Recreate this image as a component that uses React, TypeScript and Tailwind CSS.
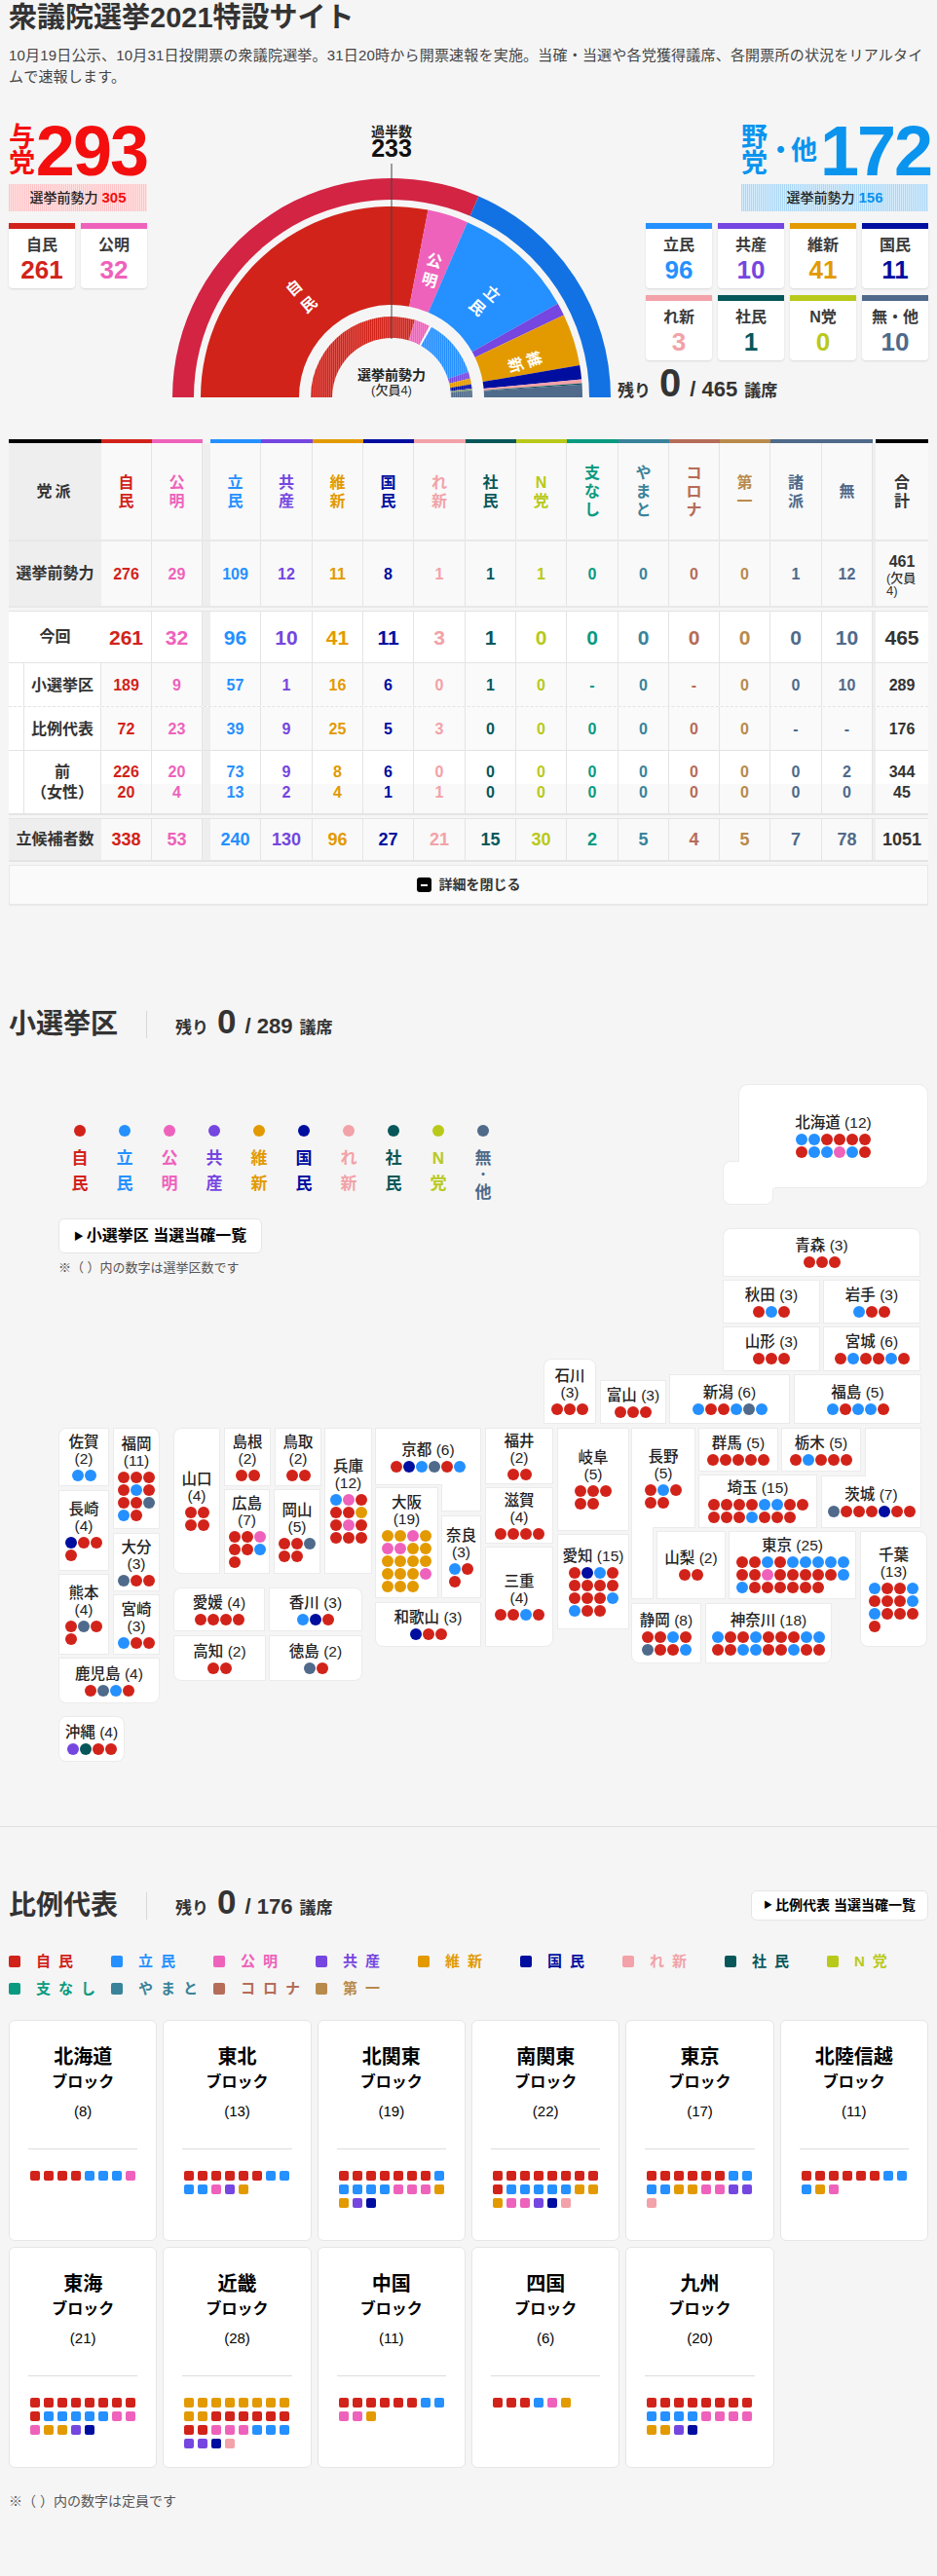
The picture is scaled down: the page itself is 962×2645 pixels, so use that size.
const P = {
  r: { bg: 'bg-[#d1231a]', text: 'text-[#d1231a]', fill: '#d1231a' },
  k: { bg: 'bg-[#ee62bb]', text: 'text-[#ee62bb]', fill: '#ee62bb' },
  b: { bg: 'bg-[#2590ff]', text: 'text-[#2590ff]', fill: '#2590ff' },
  u: { bg: 'bg-[#7546e0]', text: 'text-[#7546e0]', fill: '#7546e0' },
  o: { bg: 'bg-[#e29a00]', text: 'text-[#e29a00]', fill: '#e29a00' },
  n: { bg: 'bg-[#000ea0]', text: 'text-[#000ea0]', fill: '#000ea0' },
  l: { bg: 'bg-[#f2a2a8]', text: 'text-[#f2a2a8]', fill: '#f2a2a8' },
  s: { bg: 'bg-[#07575a]', text: 'text-[#07575a]', fill: '#07575a' },
  y: { bg: 'bg-[#b8c91a]', text: 'text-[#b8c91a]', fill: '#b8c91a' },
  g: { bg: 'bg-[#4f6a8a]', text: 'text-[#4f6a8a]', fill: '#4f6a8a' },
  a: { bg: 'bg-[#0a9a80]', text: 'text-[#0a9a80]', fill: '#0a9a80' },
  m: { bg: 'bg-[#39839a]', text: 'text-[#39839a]', fill: '#39839a' },
  c: { bg: 'bg-[#b56c58]', text: 'text-[#b56c58]', fill: '#b56c58' },
  d: { bg: 'bg-[#b88a4c]', text: 'text-[#b88a4c]', fill: '#b88a4c' },
} as const

type Key = keyof typeof P

const keys = (s: string) => s.split('') as Key[]

const FONT = "font-['Liberation_Sans','Noto_Sans_CJK_JP',sans-serif]"

function polar(r: number, deg: number) {
  const a = (deg * Math.PI) / 180
  return [251 - r * Math.cos(a), 280 - r * Math.sin(a)]
}

function sector(r0: number, r1: number, from: number, to: number) {
  const a = (from / 465) * 180
  const b = (to / 465) * 180
  const [x0, y0] = polar(r1, a)
  const [x1, y1] = polar(r1, b)
  const [x2, y2] = polar(r0, b)
  const [x3, y3] = polar(r0, a)
  return `M${x0} ${y0}A${r1} ${r1} 0 0 1 ${x1} ${y1}L${x2} ${y2}A${r0} ${r0} 0 0 0 ${x3} ${y3}Z`
}

function Ring({ r0, r1, parts, striped }: { r0: number; r1: number; parts: [string, number][]; striped?: boolean }) {
  let at = 0
  return (
    <>
      {parts.map(([fill, n], i) => {
        const d = sector(r0, r1, at, at + n)
        at += n
        return (
          <g key={i}>
            <path d={d} fill={fill} />
            {striped && <path d={d} fill="url(#stripes)" />}
          </g>
        )
      })}
    </>
  )
}

const chartLabels: [string, number, number, number][] = [
  ['自', 151, 168, -40],
  ['民', 166, 185, -40],
  ['公', 295, 140, 16],
  ['明', 290, 160, 16],
  ['立', 354, 174, 42],
  ['民', 339, 188, 42],
  ['維', 397, 241, 72],
  ['新', 378, 247, 72],
]

function Chart() {
  return (
    <svg width="512" height="280" viewBox="0 0 512 280" className="block">
      <defs>
        <pattern id="stripes" width="2" height="2" patternUnits="userSpaceOnUse">
          <rect width="1" height="2" fill="#ffffff" fillOpacity="0.22" />
        </pattern>
      </defs>
      <Ring r0={203} r1={225} parts={[['#d32443', 293], ['#1272e3', 172]]} />
      <Ring
        r0={95}
        r1={196}
        parts={[
          [P.r.fill, 261],
          [P.k.fill, 32],
          [P.b.fill, 96],
          [P.u.fill, 10],
          [P.o.fill, 41],
          [P.n.fill, 11],
          [P.l.fill, 3],
          [P.s.fill, 1],
          [P.g.fill, 10],
        ]}
      />
      <Ring
        r0={61}
        r1={83}
        striped
        parts={[
          [P.r.fill, 276],
          [P.k.fill, 29],
          ['#ffffff', 4],
          [P.b.fill, 109],
          [P.u.fill, 12],
          [P.o.fill, 11],
          [P.n.fill, 8],
          [P.l.fill, 1],
          [P.s.fill, 1],
          [P.y.fill, 1],
          [P.g.fill, 13],
        ]}
      />
      <line x1="251" y1="40" x2="251" y2="220" stroke="#444" strokeWidth="1" />
      <text x="251" y="12" textAnchor="middle" fontSize="14" fontWeight="700" fill="#222">
        過半数
      </text>
      <text x="251" y="33" textAnchor="middle" fontSize="25" fontWeight="700" fill="#111">
        233
      </text>
      {chartLabels.map(([c, x, y, rot], i) => (
        <text
          key={i}
          x={x}
          y={y}
          textAnchor="middle"
          dominantBaseline="central"
          fontSize="16"
          fontWeight="700"
          fill="#fff"
          transform={`rotate(${rot} ${x} ${y})`}
        >
          {c}
        </text>
      ))}
      <text x="251" y="262" textAnchor="middle" fontSize="14" fontWeight="700" fill="#222">
        選挙前勢力
      </text>
      <text x="251" y="277" textAnchor="middle" fontSize="13" fontWeight="500" fill="#333">
        (欠員4)
      </text>
    </svg>
  )
}

function SeatCard({ name, value, p }: { name: string; value: number; p: Key }) {
  return (
    <div className="flex h-[67px] flex-col items-center rounded-b-[4px] bg-white shadow-[0_1px_2px_#d8d8d8]">
      <div className={`h-[6px] w-full ${P[p].bg}`} />
      <div className="mt-[6px] text-[16px] leading-[22px] font-bold text-[#3a3a3a]">{name}</div>
      <div className={`text-[26px] leading-[28px] font-bold ${P[p].text}`}>{value}</div>
    </div>
  )
}

function Remaining({ total, big = false }: { total: number; big?: boolean }) {
  return (
    <div className="flex items-baseline font-bold whitespace-nowrap text-[#333]">
      <span className="text-[17px]">残り</span>
      <span className={`mx-[9px] ${big ? 'text-[40px] leading-[32px]' : 'text-[35px] leading-[28px]'}`}>0</span>
      <span className="text-[22px]">/ {total}</span>
      <span className="ml-[7px] text-[17px]">議席</span>
    </div>
  )
}

function Hero() {
  return (
    <div className="flex h-[323px] items-start px-[9px]">
      <div className="w-[142px] shrink-0">
        <div className="flex h-[54px] items-center text-[#f40f0f]">
          <div className="w-[28px] text-[27px] leading-[27px] font-bold">与<br />党</div>
          <div className="text-[72px] leading-[54px] font-bold tracking-[-2px]">293</div>
        </div>
        <div className="mt-[7px] flex h-[28px] items-center justify-center bg-[repeating-linear-gradient(90deg,#ffc4c8_0,#ffc4c8_1px,#ffe2e2_1px,#ffe2e2_2px)] text-[14px] font-medium text-[#222]">
          選挙前勢力<span className="ml-[4px] text-[15px] font-bold text-[#f40f0f]">305</span>
        </div>
        <div className="mt-[12px] grid grid-cols-2 gap-[6px]">
          <SeatCard name="自民" value={261} p="r" />
          <SeatCard name="公明" value={32} p="k" />
        </div>
      </div>
      <div className="w-[512px] shrink-0">
        <Chart />
      </div>
      <div className="w-[290px] shrink-0">
        <div className="ml-[98px] flex h-[54px] items-center text-[#0a94ee]">
          <div className="w-[27px] text-[27px] leading-[27px] font-bold">野<br />党</div>
          <div className="w-[24px] text-center text-[27px] leading-[27px] font-bold">・</div>
          <div className="w-[28px] text-[27px] leading-[27px] font-bold">他</div>
          <div className="ml-[3px] text-[72px] leading-[54px] font-bold tracking-[-2px]">172</div>
        </div>
        <div className="mt-[7px] ml-[98px] flex h-[28px] items-center justify-center bg-[repeating-linear-gradient(90deg,#acd8f6_0,#acd8f6_1px,#d6ecfb_1px,#d6ecfb_2px)] text-[14px] font-medium text-[#222]">
          選挙前勢力<span className="ml-[4px] text-[15px] font-bold text-[#0a94ee]">156</span>
        </div>
        <div className="mt-[12px] grid grid-cols-4 gap-x-[6px] gap-y-[7px]">
          <SeatCard name="立民" value={96} p="b" />
          <SeatCard name="共産" value={10} p="u" />
          <SeatCard name="維新" value={41} p="o" />
          <SeatCard name="国民" value={11} p="n" />
          <SeatCard name="れ新" value={3} p="l" />
          <SeatCard name="社民" value={1} p="s" />
          <SeatCard name="N党" value={0} p="y" />
          <SeatCard name="無・他" value={10} p="g" />
        </div>
        <div className="mt-[7px] -ml-[29px]">
          <Remaining total={465} big />
        </div>
      </div>
    </div>
  )
}

const ROW = 'grid grid-cols-[95px_52px_52px_8px_52px_53px_52px_52px_53px_52px_52px_53px_52px_52px_52px_53px_52px_3px_54px]'
const colKeys = keys('rk')
const restKeys = keys('buonlsyamcdgg')
const headers = ['自民', '公明', '立民', '共産', '維新', '国民', 'れ新', '社民', 'N党', '支なし', 'やまと', 'コロナ', '第一', '諸派', '無']
const CELL = 'flex flex-col items-center justify-center border-r border-[#e4e4e4] font-bold'

function Lines({ value }: { value: string }) {
  return (
    <>
      {value.split('/').map((t, j) => (
        <div key={j} className="leading-[21px]">{t}</div>
      ))}
    </>
  )
}

function Cells({ values, size, note }: { values: string[]; size: string; note?: boolean }) {
  return (
    <>
      {colKeys.map((k, i) => (
        <div key={i} className={`${CELL} ${size} ${P[k].text}`}><Lines value={values[i]} /></div>
      ))}
      <div className="bg-[#eeeeee]" />
      {restKeys.map((k, i) => (
        <div key={i} className={`${CELL} ${size} ${P[k].text}`}><Lines value={values[i + 2]} /></div>
      ))}
      <div className="bg-[#eeeeee]" />
      <div className={`${CELL} border-r-0 ${size} text-[#333]`}>
        <Lines value={values[15]} />
        {note && (
          <div className="w-[32px] text-[13px] leading-[13px] font-medium">(欠員<br />4)</div>
        )}
      </div>
    </>
  )
}

function SubLabel({ children }: { children: React.ReactNode }) {
  return (
    <div className="flex h-full bg-white">
      <div className="w-[15px]" />
      <div className="flex flex-1 items-center justify-center border-r border-l border-[#e4e4e4] text-center text-[16px] leading-[21px] font-bold text-[#333]">
        {children}
      </div>
    </div>
  )
}

function ResultTable() {
  return (
    <div className="mx-[9px]">
      <div className={`${ROW} h-[4px]`}>
        <div className="bg-black" />
        {colKeys.map((k) => <div key={k} className={P[k].bg} />)}
        <div />
        {restKeys.map((k, i) => <div key={i} className={P[k].bg} />)}
        <div />
        <div className="bg-black" />
      </div>
      <div className={`${ROW} h-[101px] border-b-2 border-[#e8e8e8] bg-[#f9f9f9]`}>
        <div className="flex items-center justify-center bg-[#eeeeee] text-[16px] font-bold tracking-[3px] text-[#333]">党派</div>
        {headers.slice(0, 2).map((h, i) => (
          <div key={h} className={`${CELL} text-[16px] ${P[colKeys[i]].text}`}>
            {h.split('').map((c, j) => <div key={j} className="leading-[19px]">{c}</div>)}
          </div>
        ))}
        <div className="bg-[#eeeeee]" />
        {headers.slice(2).map((h, i) => (
          <div key={h} className={`${CELL} text-[16px] ${P[restKeys[i]].text}`}>
            {h.split('').map((c, j) => <div key={j} className="leading-[19px]">{c}</div>)}
          </div>
        ))}
        <div className="bg-[#eeeeee]" />
        <div className={`${CELL} border-r-0 text-[16px] text-[#333]`}>
          <div className="leading-[19px]">合</div>
          <div className="leading-[19px]">計</div>
        </div>
      </div>
      <div className={`${ROW} h-[68px] border-b-2 border-[#e8e8e8] bg-[#f9f9f9]`}>
        <div className="flex items-center justify-center bg-[#eeeeee] text-[16px] font-bold text-[#333]">選挙前勢力</div>
        <Cells size="text-[16px]" note values={['276', '29', '109', '12', '11', '8', '1', '1', '1', '0', '0', '0', '0', '1', '12', '461']} />
      </div>
      <div className={`${ROW} mt-[3px] h-[54px] border-t border-b border-[#e4e4e4] bg-white`}>
        <div className="flex items-center justify-center text-[16px] font-bold text-[#333]">今回</div>
        <Cells size="text-[21px]" values={['261', '32', '96', '10', '41', '11', '3', '1', '0', '0', '0', '0', '0', '0', '10', '465']} />
      </div>
      <div className={`${ROW} h-[45px] border-b border-dashed border-[#e4e4e4] bg-[#fafafa]`}>
        <SubLabel>小選挙区</SubLabel>
        <Cells size="text-[16px]" values={['189', '9', '57', '1', '16', '6', '0', '1', '0', '-', '0', '-', '0', '0', '10', '289']} />
      </div>
      <div className={`${ROW} h-[45px] border-b border-[#e4e4e4] bg-[#fafafa]`}>
        <SubLabel>比例代表</SubLabel>
        <Cells size="text-[16px]" values={['72', '23', '39', '9', '25', '5', '3', '0', '0', '0', '0', '0', '0', '-', '-', '176']} />
      </div>
      <div className={`${ROW} h-[66px] border-b-2 border-[#e4e4e4] bg-[linear-gradient(#ffffff_34px,#f9f9f9_34px)]`}>
        <SubLabel><span>前<br />（女性）</span></SubLabel>
        <Cells size="text-[16px]" values={['226/20', '20/4', '73/13', '9/2', '8/4', '6/1', '0/1', '0/0', '0/0', '0/0', '0/0', '0/0', '0/0', '0/0', '2/0', '344/45']} />
      </div>
      <div className={`${ROW} mt-[3px] h-[45px] border-t border-b-2 border-[#e4e4e4] bg-[#f9f9f9]`}>
        <div className="flex items-center justify-center bg-[#eeeeee] text-[16px] font-bold text-[#333]">立候補者数</div>
        <Cells size="text-[18px]" values={['338', '53', '240', '130', '96', '27', '21', '15', '30', '2', '5', '4', '5', '7', '78', '1051']} />
      </div>
      <div className="mt-[3px] flex h-[42px] items-center justify-center gap-[8px] border border-b-2 border-[#e8e8e8] bg-[#fafafa] text-[14px] font-bold text-[#333]">
        <span className="flex h-[15px] w-[15px] items-center justify-center rounded-[3px] bg-black">
          <span className="h-[2px] w-[7px] bg-white" />
        </span>
        詳細を閉じる
      </div>
    </div>
  )
}

const MAP_TOP = 1100

type Tile = { label?: string; x: number; y: number; w: number; h: number; dots?: string; cols?: number; cls?: string }

const tiles: Tile[] = [
  { label: '北海道 (12)', x: 758, y: 1114, w: 195, h: 107, dots: 'bbrrrrrbbkbr', cols: 6, cls: 'rounded-tl-[10px] rounded-tr-[10px] rounded-br-[10px]' },
  { x: 742, y: 1193, w: 52, h: 45, cls: 'rounded-tl-[8px] rounded-bl-[8px] rounded-br-[8px]' },
  { x: 759, y: 1188, w: 36, h: 33, cls: 'border-transparent' },
  { label: '青森 (3)', x: 742, y: 1262, w: 203, h: 50, dots: 'rrr', cols: 3, cls: 'rounded-tl-[8px] rounded-tr-[8px]' },
  { label: '秋田 (3)', x: 742, y: 1315, w: 100, h: 45, dots: 'rbr', cols: 3 },
  { label: '岩手 (3)', x: 845, y: 1315, w: 100, h: 45, dots: 'brr', cols: 3 },
  { label: '山形 (3)', x: 742, y: 1363, w: 100, h: 46, dots: 'rrr', cols: 3 },
  { label: '宮城 (6)', x: 845, y: 1363, w: 100, h: 46, dots: 'rbrrbr', cols: 6 },
  { label: '石川\n(3)', x: 558, y: 1396, w: 54, h: 67, dots: 'rrr', cols: 3, cls: 'rounded-tl-[8px] rounded-tr-[8px]' },
  { label: '富山 (3)', x: 616, y: 1418, w: 68, h: 45, dots: 'rrr', cols: 3 },
  { label: '新潟 (6)', x: 687, y: 1412, w: 124, h: 51, dots: 'brrbgb', cols: 6 },
  { label: '福島 (5)', x: 815, y: 1412, w: 131, h: 51, dots: 'brbbr', cols: 5 },
  { label: '佐賀\n(2)', x: 60, y: 1467, w: 52, h: 60, dots: 'bb', cols: 2, cls: 'rounded-tl-[8px]' },
  { label: '福岡\n(11)', x: 116, y: 1467, w: 48, h: 104, dots: 'rrrrbrrrgbr', cols: 3, cls: 'rounded-tr-[8px]' },
  { label: '長崎\n(4)', x: 60, y: 1531, w: 52, h: 83, dots: 'nrrr', cols: 3 },
  { label: '大分\n(3)', x: 116, y: 1575, w: 48, h: 60, dots: 'grr', cols: 3 },
  { label: '熊本\n(4)', x: 60, y: 1617, w: 52, h: 83, dots: 'rgrr', cols: 3 },
  { label: '宮崎\n(3)', x: 116, y: 1638, w: 48, h: 62, dots: 'brr', cols: 3 },
  { label: '鹿児島 (4)', x: 60, y: 1703, w: 104, h: 47, dots: 'rgbr', cols: 4, cls: 'rounded-bl-[8px] rounded-br-[8px]' },
  { label: '沖縄 (4)', x: 60, y: 1763, w: 68, h: 47, dots: 'usrr', cols: 4, cls: 'rounded-[8px]' },
  { label: '山口\n(4)', x: 178, y: 1467, w: 48, h: 150, dots: 'rrrr', cols: 2, cls: 'rounded-tl-[8px] rounded-bl-[8px]' },
  { label: '島根\n(2)', x: 230, y: 1467, w: 48, h: 60, dots: 'rr', cols: 2 },
  { label: '鳥取\n(2)', x: 282, y: 1467, w: 48, h: 60, dots: 'rr', cols: 2 },
  { label: '広島\n(7)', x: 230, y: 1530, w: 47, h: 87, dots: 'rrkrrbr', cols: 3 },
  { label: '岡山\n(5)', x: 281, y: 1530, w: 48, h: 87, dots: 'rrgrr', cols: 3 },
  { label: '兵庫\n(12)', x: 333, y: 1467, w: 49, h: 150, dots: 'bkrrrorkrrrr', cols: 3 },
  { label: '京都 (6)', x: 385, y: 1467, w: 109, h: 59, dots: 'rnbgrb', cols: 6 },
  { x: 453, y: 1525, w: 41, h: 28, cls: 'border-t-0' },
  { label: '大阪\n(19)', x: 385, y: 1528, w: 65, h: 114, dots: 'ookokkoooooooookooo', cols: 4 },
  { label: '奈良\n(3)', x: 453, y: 1557, w: 41, h: 85, dots: 'brr', cols: 2 },
  { label: '和歌山 (3)', x: 385, y: 1646, w: 109, h: 46, dots: 'nrr', cols: 3, cls: 'rounded-bl-[8px]' },
  { label: '愛媛 (4)', x: 178, y: 1631, w: 94, h: 45, dots: 'rrrr', cols: 4, cls: 'rounded-tl-[8px]' },
  { label: '香川 (3)', x: 276, y: 1631, w: 96, h: 45, dots: 'bnr', cols: 3, cls: 'rounded-tr-[8px]' },
  { label: '高知 (2)', x: 178, y: 1680, w: 95, h: 47, dots: 'rr', cols: 2, cls: 'rounded-bl-[8px]' },
  { label: '徳島 (2)', x: 276, y: 1680, w: 96, h: 47, dots: 'gr', cols: 2, cls: 'rounded-br-[8px]' },
  { label: '福井\n(2)', x: 498, y: 1467, w: 70, h: 58, dots: 'rr', cols: 2 },
  { label: '滋賀\n(4)', x: 498, y: 1528, w: 70, h: 58, dots: 'rrrr', cols: 4 },
  { label: '三重\n(4)', x: 498, y: 1589, w: 70, h: 103, dots: 'rrbr', cols: 4, cls: 'rounded-br-[8px]' },
  { label: '岐阜\n(5)', x: 572, y: 1467, w: 74, h: 106, dots: 'rrrrr', cols: 3 },
  { label: '愛知 (15)', x: 572, y: 1576, w: 74, h: 98, dots: 'rnbrrrrrrrrbbrr', cols: 4 },
  { label: '長野\n(5)', x: 648, y: 1467, w: 66, h: 103, dots: 'rbrrr', cols: 3 },
  { x: 648, y: 1569, w: 23, h: 74, cls: 'border-t-0' },
  { label: '群馬 (5)', x: 717, y: 1467, w: 82, h: 45, dots: 'rrrrr', cols: 5 },
  { label: '栃木 (5)', x: 802, y: 1467, w: 82, h: 45, dots: 'rbrrr', cols: 5 },
  { label: '茨城 (7)', x: 843, y: 1516, w: 103, h: 54, dots: 'grrrnrr', cols: 7 },
  { x: 888, y: 1467, w: 58, h: 50, cls: 'border-b-0' },
  { label: '埼玉 (15)', x: 717, y: 1515, w: 122, h: 55, dots: 'rrrrbbrrrrrbrrr', cols: 8 },
  { label: '山梨 (2)', x: 674, y: 1573, w: 71, h: 70, dots: 'rr', cols: 2 },
  { label: '東京 (25)', x: 748, y: 1573, w: 131, h: 70, dots: 'rrbrbbbbbrrkrrrrrbbrrrrrr', cols: 9 },
  { label: '千葉\n(13)', x: 883, y: 1573, w: 69, h: 119, dots: 'brrbrrrbbrrrr', cols: 4, cls: 'rounded-tr-[8px] rounded-bl-[8px] rounded-br-[8px]' },
  { label: '静岡 (8)', x: 648, y: 1647, w: 72, h: 62, dots: 'rrbrgrrb', cols: 4, cls: 'rounded-bl-[8px]' },
  { label: '神奈川 (18)', x: 724, y: 1647, w: 130, h: 62, dots: 'brrbrrrbbrrbbrrbrr', cols: 9, cls: 'rounded-br-[8px]' },
]

function MapTile({ label, x, y, w, h, dots, cols, cls = '' }: Tile) {
  return (
    <div
      className={`absolute flex flex-col items-center justify-center border border-[#ebebeb] bg-white text-[15.5px] leading-[17px] font-medium text-[#222] ${cls}`}
      style={{ left: x, top: y - MAP_TOP, width: w, height: h }}
    >
      {label && <div className="text-center whitespace-pre-line">{label}</div>}
      {dots && (
        <div className="mt-[3px] flex flex-wrap gap-[1px]" style={{ width: (cols ?? 1) * 13 - 1 }}>
          {keys(dots).map((k, i) => (
            <span key={i} className={`h-[12px] w-[12px] rounded-full ${P[k].bg}`} />
          ))}
        </div>
      )}
    </div>
  )
}

const legend: [string, Key][] = [
  ['自民', 'r'], ['立民', 'b'], ['公明', 'k'], ['共産', 'u'], ['維新', 'o'],
  ['国民', 'n'], ['れ新', 'l'], ['社民', 's'], ['N党', 'y'], ['無・他', 'g'],
]

function DistrictMap() {
  return (
    <div className="relative mt-[32px] h-[776px] pl-[59px]">
      <div className="flex h-[152px] items-start pt-[56px]">
        {legend.map(([name, k]) => (
          <div key={name} className={`flex w-[46px] flex-col items-center text-[17px] font-bold ${P[k].text}`}>
            <span className={`mb-[10px] h-[12px] w-[12px] rounded-full ${P[k].bg}`} />
            {name.split('').map((c, i) =>
              c === '・'
                ? <span key={i} className="h-[9px] text-[12px] leading-[9px]">・</span>
                : <span key={i} className="leading-[26px]">{c}</span>,
            )}
          </div>
        ))}
      </div>
      <div className="ml-[1px] flex h-[36px] w-[209px] items-center justify-center rounded-[6px] border border-[#e5e5e5] bg-white text-[16px] font-bold text-black">
        <span className="mr-[3px] text-[10px]">▶</span>小選挙区 当選当確一覧
      </div>
      <div className="mt-[6px] ml-[1px] text-[13px] leading-[18px] text-[#555]">※（ ）内の数字は選挙区数です</div>
      {tiles.map((t, i) => <MapTile key={i} {...t} />)}
    </div>
  )
}

const blocks: [string, number, string][] = [
  ['北海道', 8, 'rrrrbbbk'],
  ['東北', 13, 'rrrrrrbbbbkuo'],
  ['北関東', 19, 'rrrrrrrbbbbbkkkooun'],
  ['南関東', 22, 'rrrrrrrrrbbbbboookkunl'],
  ['東京', 17, 'rrrrrrbbbbookkuul'],
  ['北陸信越', 11, 'rrrrrrbbbok'],
  ['東海', 21, 'rrrrrrrrrbbbbbkkkooun'],
  ['近畿', 28, 'oooooooooorrrrrrrrkkkbbbuunl'],
  ['中国', 11, 'rrrrrrbbkko'],
  ['四国', 6, 'rrrbko'],
  ['九州', 20, 'rrrrrrrrbbbbkkkkooun'],
]

const propLegend: [string, Key][] = [
  ['自民', 'r'], ['立民', 'b'], ['公明', 'k'], ['共産', 'u'], ['維新', 'o'], ['国民', 'n'], ['れ新', 'l'], ['社民', 's'], ['N党', 'y'],
  ['支なし', 'a'], ['やまと', 'm'], ['コロナ', 'c'], ['第一', 'd'],
]

function BlockCard({ name, seats, dots }: { name: string; seats: number; dots: string }) {
  return (
    <div className="flex h-[227px] flex-col rounded-[6px] border border-[#e6e6e6] bg-white text-center text-black">
      <div className="mt-[25px] text-[20px] leading-[24px] font-bold">{name}</div>
      <div className="mt-[4px] text-[16px] leading-[20px] font-bold">ブロック</div>
      <div className="mt-[11px] text-[15px] leading-[18px]">({seats})</div>
      <div className="mx-[19px] mt-[29px] h-[1px] bg-[#dddddd]" />
      <div className="mt-[22px] ml-[21px] flex w-[112px] flex-wrap gap-[4px]">
        {keys(dots).map((k, i) => <span key={i} className={`h-[10px] w-[10px] rounded-[2px] ${P[k].bg}`} />)}
      </div>
    </div>
  )
}

function ProportionalSection() {
  return (
    <div className="mt-[65px] px-[9px]">
      <div className="flex h-[31px] items-center">
        <h2 className="w-[112px] text-[28px] leading-[31px] font-bold whitespace-nowrap text-[#333]">比例代表</h2>
        <div className="mx-[29px] h-[28px] w-[1px] bg-[#d8d8d8]" />
        <Remaining total={176} />
        <div className="ml-auto flex h-[31px] w-[182px] items-center justify-center rounded-[6px] border border-[#e5e5e5] bg-white text-[14px] font-bold text-black">
          <span className="mr-[3px] text-[9px]">▶</span>比例代表 当選当確一覧
        </div>
      </div>
      <div className="mt-[28px] flex w-[950px] flex-wrap">
        {propLegend.map(([name, k]) => (
          <div key={name} className="flex h-[28px] w-[105px] items-center">
            <span className={`h-[12px] w-[12px] rounded-[2px] ${P[k].bg}`} />
            <span className={`ml-[16px] text-[15px] font-bold tracking-[8px] ${P[k].text}`}>{name}</span>
          </div>
        ))}
      </div>
      <div className="mt-[18px] grid grid-cols-6 gap-[6px]">
        {blocks.map(([name, seats, dots]) => <BlockCard key={name} name={name} seats={seats} dots={dots} />)}
      </div>
      <div className="mt-[24px] text-[14px] leading-[20px] text-[#555]">※（ ）内の数字は定員です</div>
    </div>
  )
}

export default function App() {
  return (
    <div className={`min-h-[2645px] w-[962px] overflow-hidden bg-[#f5f5f5] text-[#333] ${FONT}`}>
      <div className="h-[128px] px-[9px]">
        <h1 className="text-[29px] leading-[37px] font-bold text-[#333]">衆議院選挙2021特設サイト</h1>
        <p className="mt-[9px] text-[15px] leading-[22px] tracking-[0.2px] text-[#444]">
          10月19日公示、10月31日投開票の衆議院選挙。31日20時から開票速報を実施。当確・当選や各党獲得議席、各開票所の状況をリアルタイムで速報します。
        </p>
      </div>
      <Hero />
      <ResultTable />
      <div className="mt-[107px] flex h-[30px] items-center px-[9px]">
        <h2 className="w-[112px] text-[28px] leading-[30px] font-bold text-[#333]">小選挙区</h2>
        <div className="mx-[29px] h-[28px] w-[1px] bg-[#d8d8d8]" />
        <Remaining total={289} />
      </div>
      <DistrictMap />
      <div className="h-[1px] bg-[#e0e0e0]" />
      <ProportionalSection />
    </div>
  )
}
